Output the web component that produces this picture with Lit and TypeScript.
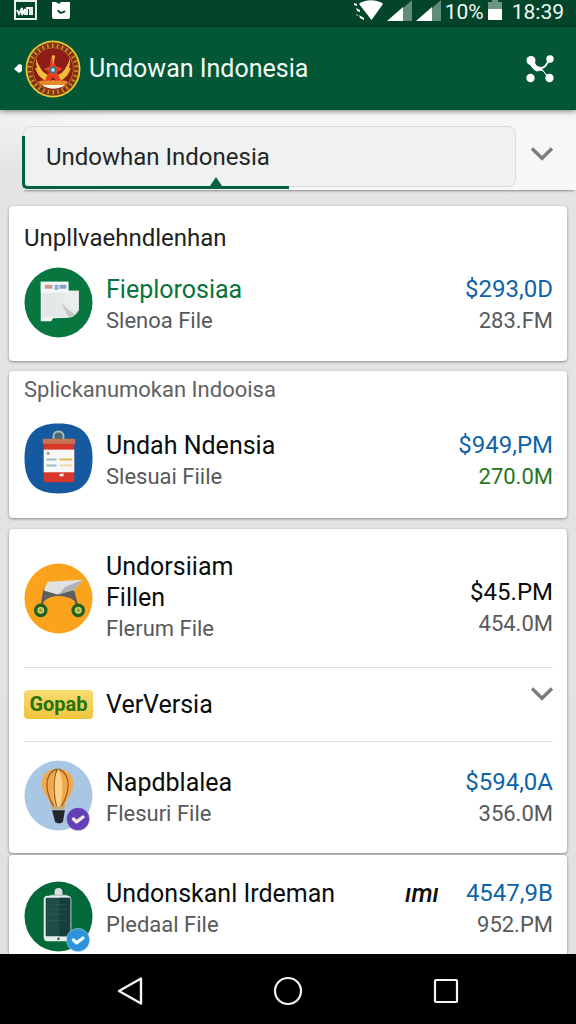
import { LitElement, html, css, svg, nothing, TemplateResult } from "lit";
import { customElement, property } from "lit/decorators.js";
import { classMap } from "lit/directives/class-map.js";

const chevron = html`<svg width="24" height="16" viewBox="0 0 24 16" fill="none" stroke="#7b7d7e" stroke-width="3.4" aria-hidden="true"><path d="M2 2.5 12 12.3 22 2.5" /></svg>`;

const rim = Array.from({ length: 30 }, (_, i) => i * 12);

const logo = html`<svg width="56" height="58" viewBox="0 0 56 58" aria-hidden="true">
  <ellipse cx="28" cy="29" rx="27.5" ry="28.5" fill="#e9c92f" />
  <ellipse cx="28" cy="29" rx="25.7" ry="26.7" fill="#7d3413" />
  ${rim.map((a) => svg`<path d="M27 3.5h1.5v4H27z" fill="#d9912b" transform="rotate(${a} 28 29)" />`)}
  <ellipse cx="28" cy="29" rx="20.5" ry="21.5" fill="#d9942a" />
  <ellipse cx="28" cy="29" rx="20" ry="21" fill="#8c1c16" />
  <path d="M11 18c0 12 3 20 13 23l4-5c-9 0-14-8-17-18zM45 18c0 12-3 20-13 23l-4-5c9 0 14-8 17-18z" fill="#f3c13a" />
  <path d="M12 24c3 8 6 12 12 14M44 24c-3 8-6 12-12 14M11 28c2 6 5 10 10 12M45 28c-2 6-5 10-10 12" stroke="#f3c13a" stroke-width="1.6" fill="none" />
  <path d="M26 17l4-2-1 7 2 4 7 3-6 3 4 9h-4l-4-4-4 4-4-1 4-8-5-3 6-3z" fill="#e8401f" />
  <path d="M27 15l3 1-2 9z" fill="#f5c63c" />
  <circle cx="28" cy="30" r="3.4" fill="#2b78a0" />
  <path d="M26 29l3-1 1 3-3 1z" fill="#bfe3ea" />
  <path d="M13 42c5-3 10 0 15-2 5 2 10-1 15 2l-3 3H16z" fill="#e98a2a" />
  <path d="M17 45h23c-6 5-17 5-23 0z" fill="#fbf3e4" />
</svg>`;

const wifi = html`<svg width="29" height="20" viewBox="0 0 29 20" fill="#fff" aria-hidden="true">
  <path d="M5 4C11-1 23-1 29 4L17.500 20z" /><path d="M0 3l3 1v2L0 5zM2 8l4 2v2L3 11zM2 14l2 1-1 1zM5 15l5 3v2l-4-2z" />
</svg>`;

const signal = html`<svg width="25" height="21" viewBox="0 0 25 21" aria-hidden="true">
  <path d="M25 0v21H16V8z" fill="#5f8d7a" /><path d="M16 7v14H0z" fill="#fff" />
</svg>`;

const battery = html`<svg width="14" height="20" viewBox="0 0 14 20" aria-hidden="true">
  <path d="M4 0h6v2h4v8H0V2h4z" fill="#6b9683" /><path d="M0 9h14v11H0z" fill="#fff" />
</svg>`;

const share = html`<svg width="28" height="28" viewBox="0 0 28 28" fill="#fff" aria-hidden="true">
  <circle cx="5" cy="5.500" r="4.500" /><circle cx="24" cy="4" r="3.700" /><circle cx="4.500" cy="23" r="4.200" /><circle cx="23.500" cy="23" r="4.200" />
  <path d="M23.500 4.500 20 10q-2 3-7 3.500" fill="none" stroke="#fff" stroke-width="1.800" />
  <path d="M3 7Q7 15 11 16q5-2 7 1l5 6-9-11q-4 1-6-6z" stroke="#fff" stroke-width="1" />
</svg>`;

const tick = (fill: string, mark: string) => html`<svg class="tick" width="24" height="24" viewBox="0 0 24 24" aria-hidden="true">
  <circle cx="12" cy="12" r="11.600" fill=${fill} stroke="#cfe0f2" stroke-width=".5" /><path d="M7.500 12l3 2.800 6.500-4.800" fill="none" stroke=${mark} stroke-width="3.400" stroke-linecap="round" stroke-linejoin="round" />
</svg>`;

const documents = html`<svg viewBox="0 0 70 72" aria-hidden="true">
  <ellipse cx="35" cy="36" rx="34.500" ry="35.500" fill="#08763f" />
  <path d="M17 15h28v9h10.500v20q-3 6-10 7.500l-16 .5-2 3H17z" fill="#f1f3f3" />
  <path d="M18 23h27v28H18z" fill="#e5e8e9" />
  <path d="M17 15h28v11H17z" fill="#f4f6f7" />
  <path d="M21 18h8v4h-8z" fill="#c99c98" /><path d="M31 18h4v5h-4z" fill="#78b6e0" /><path d="M36 18h7v4h-7z" fill="#8d9cc0" />
  <path d="M45 24h10.500v20L38 37z" fill="#eceeee" /><path d="M38 37 55 44q-3 6-10 7z" fill="#c3c7c8" /><path d="M38 37 55 44 51 48z" fill="#e9ebeb" />
</svg>`;

const clipboard = html`<svg viewBox="0 0 70 72" aria-hidden="true">
  <path d="M35 .500C58 .500 69.500 11 69.500 36S58 71.500 35 71.500.500 61 .500 36 12 .500 35 .500z" fill="#155a9f" />
  <path d="M30 17v-4c0-6 10-6 10 0v4" fill="#476a73" stroke="#a9b9ad" stroke-width="2" />
  <rect x="20" y="19" width="31" height="41" rx="2" fill="#d8372b" />
  <path d="M19 17q0-1 1-1h31q1 0 1 1v4H19z" fill="#c97455" />
  <path d="M20 27h31v23H20z" fill="#f7f7f5" />
  <circle cx="24.500" cy="31" r="1.500" fill="#8f9a9f" />
  <path d="M23 36h10v2H23zM23 42h10v2H23z" fill="#9bb9c4" /><path d="M36 36h13v2H36z" fill="#e2b252" /><path d="M36 42h13v2H36z" fill="#f0dba6" />
  <path d="M36 52l4-1v3h-4z" fill="#fff" />
</svg>`;

const cart = html`<svg viewBox="0 0 70 72" aria-hidden="true">
  <ellipse cx="35" cy="36" rx="34.500" ry="35.500" fill="#fba31d" />
  <path d="M21 26 18 44M50 29l4 15" stroke="#5a5c5e" stroke-width="2.400" />
  <path d="M21 25 34 31 50 27l3 13c-7-8-25-9-33-1z" fill="#5d6063" />
  <path d="M24 19 60 17 51 27 34 32 20 28z" fill="#e0e1e3" /><path d="M60 17 51 27 35 32 42 24z" fill="#b0b3b6" />
  <circle cx="17" cy="48" r="5.200" fill="#d7d66a" stroke="#23601f" stroke-width="3.400" /><circle cx="55" cy="48" r="5.200" fill="#d7d66a" stroke="#23601f" stroke-width="3.400" />
  <circle cx="17" cy="48" r="2" fill="#9aa63c" /><circle cx="55" cy="48" r="2" fill="#9aa63c" />
</svg>`;

const balloon = html`<svg viewBox="0 0 70 72" aria-hidden="true">
  <ellipse cx="35" cy="36" rx="34.500" ry="35.500" fill="#a9c6e5" />
  <path d="M34 9c12 0 17 8 16 17-1 8-8 15-9 22H28c-1-8-9-14-10-22C17 17 22 9 34 9z" fill="#efaa4e" />
  <path d="M34 9c6 5 6 25 2 39h-4c-4-14-4-34 2-39z" fill="#fbd08a" />
  <path d="M33 9c-14 6-11 24-3 38M35 9c14 6 11 24 3 38M34 9c-5 9-4 27-1 38" fill="none" stroke="#96571f" stroke-width="1.200" />
  <path d="M28 47h13v3H28z" fill="#c9a878" /><path d="M28.500 51h13l-2 12q-4 3-8 0z" fill="#25262b" />
</svg>`;

const phone = html`<svg viewBox="0 0 70 72" aria-hidden="true">
  <ellipse cx="35" cy="36" rx="34.500" ry="35.500" fill="#04693a" />
  <path d="M31 15v-4q0-4 4-4t4 4v4z" fill="#d8dfe0" /><path d="M27 14h16l3 3H24z" fill="#aebbb8" />
  <rect x="20" y="15" width="28" height="46" rx="4" fill="#e6eeee" />
  <rect x="22" y="17" width="25" height="39" rx="1" fill="#1d4d46" /><path d="M36 17h11v39H36z" fill="#153f3a" />
  <path d="M25 24h18M25 29h18M25 34h18M25 40h18" stroke="#2f5c53" stroke-width=".7" />
  <circle cx="35" cy="58.500" r="1.300" fill="#37544f" />
</svg>`;

interface Entry {
  title: string;
  subtitle: string;
  amount: string;
  detail: string;
  picture: TemplateResult;
  tone?: "blue" | "black";
  green?: boolean;
  accent?: boolean;
  narrow?: boolean;
  layout: "low" | "middle" | "high";
  badge?: TemplateResult;
  tag?: string;
}

@customElement("file-row")
class FileRow extends LitElement {
  @property({ attribute: false }) entry!: Entry;

  static styles = css`
    :host { display: block; }
    .row { display: flex; gap: 13px; align-items: flex-start; }
    .avatar { position: relative; flex: none; width: 69px; height: 71px; }
    .avatar > svg { display: block; width: 100%; height: 100%; }
    .avatar > .tick { position: absolute; right: 3px; bottom: 0; width: 24px; height: 24px; }
    .copy { flex: 1; min-width: 0; }
    .figures { text-align: right; }
    .low .copy, .low .figures { padding-top: 7px; }
    .high .avatar { margin-top: 3px; }
    .middle { align-items: center; }
    .middle .figures { align-self: flex-end; padding-bottom: 5px; }
    h3, p { margin: 0; font-weight: 400; white-space: nowrap; }
    h3, .amount { font-size: 25px; line-height: 31px; color: #0c0d0d; }
    .narrow { max-width: 150px; white-space: normal; }
    .accent { color: #08743c; }
    .amount { font-size: 24px; }
    .amount.blue { color: #0f63a8; }
    .sub, .detail { font-size: 22px; line-height: 32px; color: #58595a; }
    .detail.green { color: #26771f; }
    .tag { font-size: 25px; line-height: 31px; font-style: italic; font-weight: 500; margin-right: 14px; }
  `;

  render() {
    const e = this.entry;
    return html`<article class="row ${e.layout}">
      <div class="avatar">${e.picture}${e.badge ?? nothing}</div>
      <div class="copy">
        <h3 class=${classMap({ accent: !!e.accent, narrow: !!e.narrow })}>${e.title}</h3>
        <p class="sub">${e.subtitle}</p>
      </div>
      ${e.tag ? html`<span class="tag">${e.tag}</span>` : nothing}
      <div class="figures">
        <p class="amount ${e.tone ?? "blue"}">${e.amount}</p>
        <p class=${classMap({ detail: true, green: !!e.green })}>${e.detail}</p>
      </div>
    </article>`;
  }
}

@customElement("app-root")
class AppRoot extends LitElement {
  static styles = css`
    :host { display: flex; flex-direction: column; height: 100vh; overflow: hidden; font-family: Roboto, "Liberation Sans", sans-serif; color: #0c0d0d; background: #e0e3e2; }
    * { box-sizing: border-box; }
    button { border: 0; padding: 0; background: none; font: inherit; color: inherit; }
    svg { display: block; }
    .status { flex: none; display: flex; align-items: flex-start; height: 27px; padding: 0 12px 0 14px; background: #02452a; color: #f3f8f5; }
    .notices { display: flex; gap: 15px; flex: 1; }
    .system { display: flex; gap: 4px; font-size: 21px; line-height: 25px; }
    .clock { margin-left: 6px; }
    .bar { flex: none; display: flex; align-items: center; height: 83px; padding: 0 22px 0 14px; background: #035736; color: #f4faf6; box-shadow: 0 1px 6px #0008; z-index: 1; }
    .bar h1 { flex: 1; margin: 0 0 0 8px; font-size: 25px; line-height: 32px; font-weight: 400; }
    .emblem { margin-left: 3px; }
    .page { flex: 1; min-height: 0; overflow: hidden; background: linear-gradient(#f3f4f4, #e3e5e5 60px, #dfe2e1); }
    .search { display: flex; align-items: flex-start; height: 80px; margin-left: 22px; padding: 16px 0 0 1px; background: linear-gradient(90deg, #f6f7f700, #f6f7f7 80px); box-shadow: 0 3px 2px -2px #0006; position: relative; }
    .field { flex: 1; height: 61px; border: 1px solid #d9dcdc; border-radius: 8px; background: #f0f2f1; padding: 0 22px; font: 24px/30px Roboto, "Liberation Sans", sans-serif; color: #242626; outline: 0; min-width: 0; }
    .search button { width: 60px; height: 56px; display: grid; place-items: center; padding-right: 8px; }
    .underline { position: absolute; left: 0; bottom: 1px; width: 267px; height: 53px; border-left: 3px solid #07613f; border-bottom: 3px solid #07613f; border-bottom-left-radius: 5px; pointer-events: none; }
    .underline svg { position: absolute; right: 67px; bottom: 0; }
    .cards { padding: 16px 9px 0; display: flex; flex-direction: column; gap: 10px; }
    .card { background: #fff; border-radius: 4px; box-shadow: 0 1px 3px #0006; padding: 0 14px 0 15px; }
    .card h2 { margin: 0; font-weight: 400; line-height: 32px; }
    .first { padding-top: 16px; padding-bottom: 23px; }
    .first h2 { font-size: 24px; margin-bottom: 13px; color: #202222; }
    .second { padding-top: 3px; padding-bottom: 24px; }
    .second h2 { font-size: 22px; margin-bottom: 17px; color: #606162; }
    .third { margin-top: 1px; }
    .third > * + * { border-top: 1px solid #dedfdf; }
    .trip { padding: 22px 0; }
    .version { display: flex; align-items: center; height: 74px; gap: 13px; font-size: 25px; }
    .brand { width: 69px; line-height: 29px; border-radius: 4px; text-align: center; font-size: 20px; font-weight: 700; color: #26720d; background: linear-gradient(#f7dc72, #f1c53e); }
    .version .name { flex: 1; }
    .version button { align-self: flex-start; margin: 18px -1px 0 0; }
    .balloon { padding: 18px 0 22px; }
    .last { margin-top: -8px; padding-top: 23px; padding-bottom: 24px; }
    nav { flex: none; height: 70px; background: #000; display: flex; justify-content: center; gap: 128px; align-items: center; padding-top: 4px; }
    nav button { width: 30px; height: 30px; display: grid; place-items: center; }
  `;

  render() {
    return html`
      <div class="status">
        <div class="notices">
          <svg width="23" height="20" viewBox="0 0 23 20" aria-hidden="true"><path d="M1 0v19h21V1H1" fill="none" stroke="#e8f2ec" stroke-width="2" /><path d="M3 10l2 4 3-6v7l3-6v6M13 15V8h3v7M18 7v8" fill="none" stroke="#fff" stroke-width="1.800" /></svg>
          <svg width="18" height="20" viewBox="0 0 18 20" aria-hidden="true"><path d="M0 2h4l3 2 2-2h9v15q0 2-2 2H2q-2 0-2-2z" fill="#fff" /><path d="M6 10q2 5 7 1" fill="none" stroke="#02452a" stroke-width="2" /></svg>
        </div>
        <div class="system">${wifi}${signal}${signal}<span>10%</span>${battery}<span class="clock">18:39</span></div>
      </div>
      <header class="bar">
        <button aria-label="Back"><svg width="8" height="12" viewBox="0 0 8 12"><path d="M5 1l3 1v6l-3 2-5-4z" fill="#fff" /></svg></button>
        <span class="emblem">${logo}</span>
        <h1>Undowan Indonesia</h1>
        <button aria-label="Share">${share}</button>
      </header>
      <main class="page">
        <div class="search">
          <input class="field" type="text" aria-label="Search" value="Undowhan Indonesia" />
          <button aria-label="Show options">${chevron}</button>
          <div class="underline"><svg width="12" height="9" viewBox="0 0 12 9" aria-hidden="true"><path d="M6 0l6 9H0z" fill="#07613f" /></svg></div>
        </div>
        <div class="cards">
          <section class="card first">
            <h2>Unpllvaehndlenhan</h2>
            <file-row .entry=${{ title: "Fieplorosiaa", subtitle: "Slenoa File", amount: "$293,0D", detail: "283.FM", picture: documents, accent: true, layout: "low" }}></file-row>
          </section>
          <section class="card second">
            <h2>Splickanumokan Indooisa</h2>
            <file-row .entry=${{ title: "Undah Ndensia", subtitle: "Slesuai Fiile", amount: "$949,PM", detail: "270.0M", picture: clipboard, green: true, layout: "low" }}></file-row>
          </section>
          <section class="card third">
            <file-row class="trip" .entry=${{ title: "Undorsiiam Fillen", subtitle: "Flerum File", amount: "$45.PM", detail: "454.0M", picture: cart, tone: "black", narrow: true, layout: "middle" }}></file-row>
            <div class="version"><span class="brand">Gopab</span><span class="name">VerVersia</span><button aria-label="Expand">${chevron}</button></div>
            <file-row class="balloon" .entry=${{ title: "Napdblalea", subtitle: "Flesuri File", amount: "$594,0A", detail: "356.0M", picture: balloon, layout: "low", badge: tick("#6440b8", "#fbe8dc") }}></file-row>
          </section>
          <section class="card last">
            <file-row .entry=${{ title: "Undonskanl Irdeman", subtitle: "Pledaal File", amount: "4547,9B", detail: "952.PM", picture: phone, layout: "high", badge: tick("#2d93dc", "#eaf8ff"), tag: "ımı" }}></file-row>
          </section>
        </div>
      </main>
      <nav aria-label="System">
        <button aria-label="Back"><svg width="26" height="30" viewBox="0 0 26 30"><path d="M24 2.500v25L2 15z" fill="none" stroke="#f4f4f4" stroke-width="2.400" stroke-linejoin="round" /></svg></button>
        <button aria-label="Home"><svg width="30" height="30" viewBox="0 0 30 30"><circle cx="15" cy="15" r="13" fill="none" stroke="#f4f4f4" stroke-width="2.200" /></svg></button>
        <button aria-label="Recent apps"><svg width="26" height="26" viewBox="0 0 26 26"><rect x="2" y="2" width="22" height="22" rx="1" fill="none" stroke="#f4f4f4" stroke-width="2.200" /></svg></button>
      </nav>
    `;
  }
}
